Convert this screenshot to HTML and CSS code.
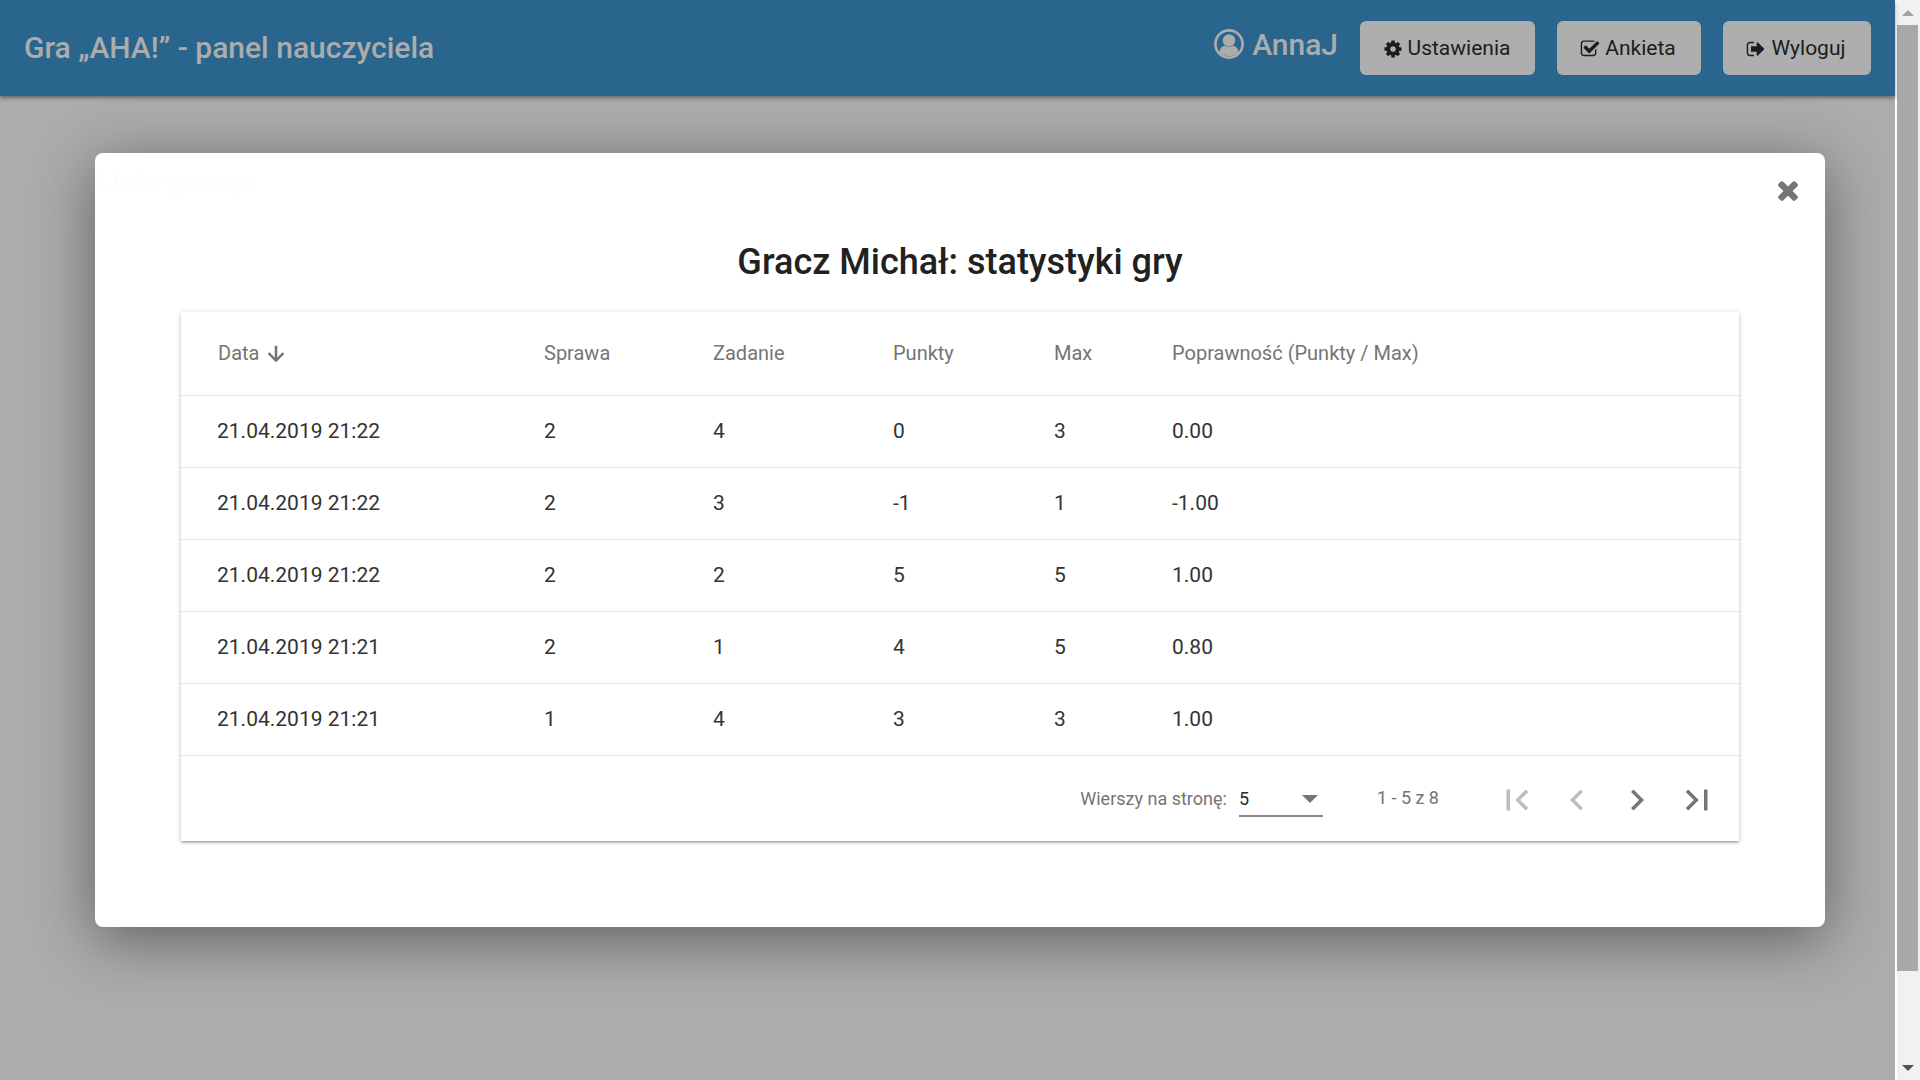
FILE: index.html
```html
<!DOCTYPE html>
<html lang="pl">

<head>
    <meta charset="UTF-8">
    <title>Gra „AHA!” - panel nauczyciela</title>
    <link rel="stylesheet" href="styles.css">
</head>

<body>
    <div class="page">
        <nav class="navbar">
            <span class="brand">Gra „AHA!” - panel nauczyciela</span>
            <div class="nav-right">
                <span class="user">
                    <svg class="user-icon" viewBox="0 0 30 30">
                        <circle cx="15" cy="15" r="13.6" fill="none" stroke="currentColor" stroke-width="2.6" />
                        <circle cx="15" cy="11.5" r="6.2" fill="currentColor" />
                        <path d="M5.5 23.5c0-4.500 3-6.500 5.500-6.800 2.500 1.800 5.500 1.800 8 0 2.500.3 5.500 2.300 5.500 6.800-5 5-14 5-19 0z" fill="currentColor" />
                    </svg>
                    AnnaJ
                </span>
                <button class="nav-btn btn-settings">
                    <svg class="btn-icon" viewBox="0 0 1792 1792"><path d="M1152 896q0-106-75-181t-181-75-181 75-75 181 75 181 181 75 181-75 75-181zm512-109v222q0 12-8 23t-20 13l-185 28q-19 54-39 91 35 50 107 138 10 12 10 25t-9 23q-27 37-99 108t-94 71q-12 0-26-9l-138-108q-44 23-91 38-16 136-29 186-7 28-36 28h-222q-14 0-24.500-8.500t-11.500-21.500l-28-184q-49-16-90-37l-141 107q-10 9-25 9-14 0-25-11-126-114-165-168-7-10-7-23 0-12 8-23 15-21 51-66.500t54-70.500q-27-50-41-99l-183-27q-13-2-21-12.500t-8-23.500v-222q0-12 8-23t19-13l186-28q14-46 39-92-40-57-107-138-10-12-10-24 0-10 9-23 26-36 98.500-107.500t94.500-71.500q13 0 26 10l138 107q44-23 91-38 16-136 29-186 7-28 36-28h222q14 0 24.500 8.500t11.500 21.500l28 184q49 16 90 37l142-107q9-9 24-9 13 0 25 10 129 119 165 170 7 8 7 22 0 12-8 23-15 21-51 66.500t-54 70.500q26 50 41 98l183 28q13 2 21 12.500t8 23.500z" /></svg>
                    Ustawienia
                </button>
                <button class="nav-btn btn-survey">
                    <svg class="btn-icon" viewBox="0 0 1792 1792"><path d="M1472 930v318q0 119-84.500 203.500t-203.500 84.500h-832q-119 0-203.500-84.500t-84.500-203.500v-832q0-119 84.500-203.500t203.500-84.500h832q63 0 117 25 15 7 18 23 3 17-9 29l-49 49q-10 10-23 10-3 0-9-2-23-6-45-6h-832q-66 0-113 47t-47 113v832q0 66 47 113t113 47h832q66 0 113-47t47-113v-254q0-13 9-22l64-64q10-10 23-10 6 0 12 3 20 8 20 29zm231-489l-814 814q-24 24-57 24t-57-24l-430-430q-24-24-24-57t24-57l110-110q24-24 57-24t57 24l263 263 647-647q24-24 57-24t57 24l110 110q24 24 24 57t-24 57z" /></svg>
                    Ankieta
                </button>
                <button class="nav-btn btn-logout">
                    <svg class="btn-icon" viewBox="0 0 1792 1792"><path d="M704 1440q0 4 1 20t.5 26.500-3 23.500-10 19.500-20.500 6.500h-320q-119 0-203.500-84.500t-84.500-203.500v-704q0-119 84.500-203.500t203.500-84.500h320q13 0 22.500 9.500t9.500 22.500q0 4 1 20t.5 26.500-3 23.500-10 19.500-20.500 6.500h-320q-66 0-113 47t-47 113v704q0 66 47 113t113 47h312l11.500 1 11.500 3 8 5.500 7 9 2 13.500zm928-544q0 26-19 45l-544 544q-19 19-45 19t-45-19-19-45v-288h-448q-26 0-45-19t-19-45v-384q0-26 19-45t45-19h448v-288q0-26 19-45t45-19 45 19l544 544q19 19 19 45z" /></svg>
                    Wyloguj
                </button>
            </div>
        </nav>

        <main class="backdrop">
            <div class="modal">
                <span class="ghost-title">Lista graczy:</span>
                <svg class="close-icon" viewBox="0 0 1792 1792"><path d="M1490 1322q0 40-28 68l-136 136q-28 28-68 28t-68-28l-294-294-294 294q-28 28-68 28t-68-28l-136-136q-28-28-28-68t28-68l294-294-294-294q-28-28-28-68t28-68l136-136q28-28 68-28t68 28l294 294 294-294q28-28 68-28t68 28l136 136q28 28 28 68t-28 68l-294 294 294 294q28 28 28 68z" /></svg>

                <h2 class="modal-title">Gracz Michał: statystyki gry</h2>

                <div class="stats-card">
                    <table class="stats-table">
                        <thead>
                            <tr>
                                <th class="col-date">Data
                                    <svg class="sort-icon" viewBox="0 0 24 24"><path d="M20 12l-1.410-1.410L13 16.170V4h-2v12.170l-5.580-5.590L4 12l8 8 8-8z" /></svg>
                                </th>
                                <th class="col-case">Sprawa</th>
                                <th class="col-task">Zadanie</th>
                                <th class="col-points">Punkty</th>
                                <th class="col-max">Max</th>
                                <th>Poprawność (Punkty / Max)</th>
                            </tr>
                        </thead>
                        <tbody>
                            <tr><td>21.04.2019 21:22</td><td>2</td><td>4</td><td>0</td><td>3</td><td>0.00</td></tr>
                            <tr><td>21.04.2019 21:22</td><td>2</td><td>3</td><td>-1</td><td>1</td><td>-1.00</td></tr>
                            <tr><td>21.04.2019 21:22</td><td>2</td><td>2</td><td>5</td><td>5</td><td>1.00</td></tr>
                            <tr><td>21.04.2019 21:21</td><td>2</td><td>1</td><td>4</td><td>5</td><td>0.80</td></tr>
                            <tr><td>21.04.2019 21:21</td><td>1</td><td>4</td><td>3</td><td>3</td><td>1.00</td></tr>
                        </tbody>
                    </table>

                    <div class="pagination">
                        <span class="per-page">Wierszy na stronę:</span>
                        <div class="per-select">
                            <span>5</span>
                            <svg class="drop-icon" viewBox="7 10 10 5"><path d="M7 10l5 5 5-5z" /></svg>
                        </div>
                        <span class="range">1 - 5 z 8</span>
                        <div class="page-btns">
                            <svg class="page-icon disabled" viewBox="0 0 24 24"><path d="M18.410 16.590L13.820 12l4.590-4.590L17 6l-6 6 6 6zM6 6h2v12H6z" /></svg>
                            <svg class="page-icon disabled" viewBox="0 0 24 24"><path d="M15.410 7.410L14 6l-6 6 6 6 1.410-1.410L10.830 12z" /></svg>
                            <svg class="page-icon" viewBox="0 0 24 24"><path d="M10 6L8.590 7.410 13.170 12l-4.580 4.590L10 18l6-6z" /></svg>
                            <svg class="page-icon" viewBox="0 0 24 24"><path d="M5.590 7.410L10.180 12l-4.590 4.590L7 18l6-6-6-6zM16 6h2v12h-2z" /></svg>
                        </div>
                    </div>
                </div>
            </div>
        </main>
    </div>

    <div class="scrollbar">
        <div class="scroll-arrow arrow-up"></div>
        <div class="scroll-thumb"></div>
        <div class="scroll-arrow arrow-down"></div>
    </div>
</body>

</html>
```

FILE: styles.css
```css
* {
    box-sizing: border-box;
}

body {
    font-family: Roboto, sans-serif;
    background-color: #acacac;
    margin: 0;
    height: 1080px;
    overflow: hidden;
    display: flex;
}

.page {
    width: 1895px;
    display: flex;
    flex-direction: column;
}

/* navbar */
.navbar {
    height: 96px;
    flex-shrink: 0;
    background-color: #2a658e;
    box-shadow: 0 2px 4px rgba(0, 0, 0, 0.4);
    display: flex;
    align-items: center;
    justify-content: space-between;
    padding: 0 24px;
    position: relative;
    z-index: 2;
}

.brand {
    font-size: 30px;
    font-weight: 500;
    color: #acacac;
    margin-top: -2px;
}

.nav-right {
    display: flex;
    align-items: center;
    gap: 22px;
}

.user {
    display: flex;
    align-items: center;
    gap: 8px;
    font-size: 30px;
    font-weight: 500;
    color: #acacac;
    margin-top: -8px;
}

.user-icon {
    width: 30px;
    height: 30px;
}

.nav-btn {
    height: 54px;
    font-family: Roboto, sans-serif;
    font-size: 21px;
    color: #1c1c1c;
    background-color: #aeaeae;
    border: none;
    border-radius: 6px;
    display: flex;
    align-items: center;
    justify-content: center;
    gap: 5px;
    padding: 0 2px 0 0;
}

.btn-settings {
    width: 175px;
}

.btn-survey {
    width: 144px;
}

.btn-logout {
    width: 148px;
}

.btn-icon {
    width: 20px;
    height: 20px;
    fill: #1c1c1c;
    margin-top: 2px;
}

/* modal */
.backdrop {
    flex: 1;
    padding: 57px 70px 0 95px;
}

.modal {
    position: relative;
    height: 774px;
    background-color: #fff;
    border-radius: 8px;
    box-shadow: 0 12px 60px rgba(0, 0, 0, 0.45);
    padding: 0 86px;
}

.ghost-title {
    position: absolute;
    left: 3px;
    top: 12px;
    font-size: 28px;
    color: #fdfdfd;
}

.close-icon {
    position: absolute;
    right: 22px;
    top: 22px;
    width: 30px;
    height: 30px;
    fill: #757575;
}

.modal-title {
    margin: 0;
    height: 159px;
    padding-top: 85px;
    text-align: center;
    font-size: 36px;
    font-weight: 500;
    line-height: 48px;
    color: #212121;
}

/* table */
.stats-card {
    background-color: #fff;
    box-shadow: 0 1px 5px rgba(0, 0, 0, 0.2), 0 2px 2px rgba(0, 0, 0, 0.14), 0 3px 1px -2px rgba(0, 0, 0, 0.12);
}

.stats-table {
    width: 100%;
    border-collapse: collapse;
    table-layout: fixed;
}

.stats-table th {
    height: 83px;
    padding: 0;
    text-align: left;
    font-size: 20px;
    font-weight: 400;
    color: #757575;
    border-bottom: 1px solid #e0e0e0;
}

.stats-table td {
    height: 72px;
    padding: 0;
    font-size: 21px;
    color: #333;
    border-bottom: 1px solid #e0e0e0;
}

.stats-table th:first-child {
    padding-left: 37px;
}

.stats-table td:first-child {
    padding-left: 36px;
}

.col-date {
    width: 363px;
}

.col-case {
    width: 169px;
}

.col-task {
    width: 180px;
}

.col-points {
    width: 161px;
}

.col-max {
    width: 118px;
}

.sort-icon {
    width: 24px;
    height: 24px;
    fill: #757575;
    stroke: #757575;
    stroke-width: 0.6;
    vertical-align: -6px;
}

/* pagination */
.pagination {
    height: 85px;
    padding: 2px 12px 0 0;
    display: flex;
    align-items: center;
    justify-content: flex-end;
    color: #757575;
    font-size: 18px;
}

.per-page {
    margin-bottom: 2px;
}

.per-select {
    width: 84px;
    height: 36px;
    margin-left: 12px;
    border-bottom: 2px solid #8a8a8a;
    display: flex;
    align-items: center;
    justify-content: space-between;
    padding-right: 5px;
    color: #2b2b2b;
}

.drop-icon {
    width: 16px;
    height: 8px;
    fill: #757575;
    margin-top: 2px;
}

.range {
    margin-left: 54px;
    margin-bottom: 4px;
}

.page-btns {
    display: flex;
    margin-left: 48px;
}

.page-icon {
    width: 60px;
    height: 42px;
    margin-top: 2px;
    fill: #757575;
}

.page-icon.disabled {
    fill: #bdbdbd;
}

/* scrollbar */
.scrollbar {
    width: 25px;
    height: 1080px;
    background-color: #f1f1f1;
    border-left: 2px solid #fff;
    display: flex;
    flex-direction: column;
    padding-right: 2px;
}

.scroll-arrow {
    height: 25px;
    flex-shrink: 0;
    display: flex;
    align-items: center;
    justify-content: center;
}

.arrow-up::before {
    content: "";
    border-left: 6px solid transparent;
    border-right: 6px solid transparent;
    border-bottom: 6px solid #a3a3a3;
}

.arrow-down {
    margin-top: auto;
}

.arrow-down::before {
    content: "";
    border-left: 6px solid transparent;
    border-right: 6px solid transparent;
    border-top: 6px solid #505050;
}

.scroll-thumb {
    height: 946px;
    background-color: #a8a8a8;
}
```
